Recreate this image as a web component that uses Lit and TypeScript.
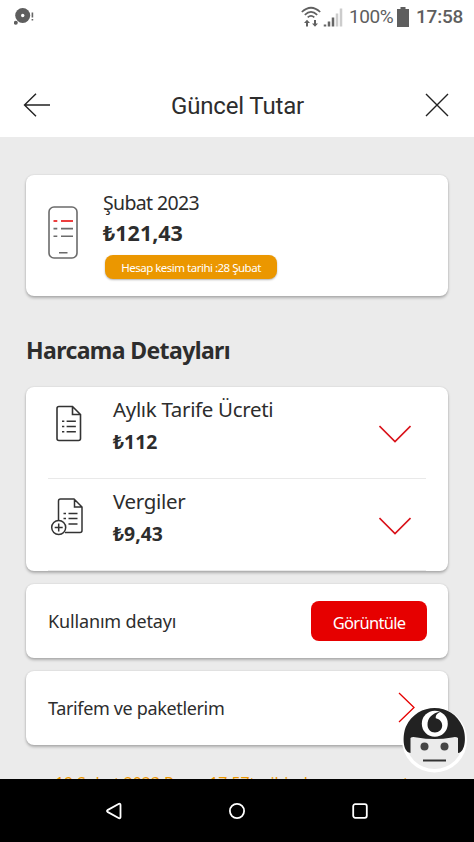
import { LitElement, html, css, svg } from "lit";
import { customElement } from "lit/decorators.js";

const lines = svg`<path d="M0 0h3M6 0h12M0 5.7h3M6 5.7h12M0 11.4h3M6 11.4h12"/>`;

@customElement("app-root")
class AppRoot extends LitElement {
  static styles = css`
    :host { display: block; position: relative; width: 474px; height: 842px; overflow: hidden; background: #ebebeb; color: #2d2d2d; font-family: "Noto Sans", "Open Sans", sans-serif; }
    * { box-sizing: border-box; }
    svg { display: block; fill: none; flex: none; }
    .screen { height: 842px; display: flex; flex-direction: column; }
    .status { height: 34px; background: #fff; display: flex; align-items: center; padding: 0 10px 0 14px; color: #5e5e5e; font-family: Roboto, sans-serif; font-size: 20px; line-height: 34px; flex: none; }
    .status .gap { flex: 1; }
    .pct { margin-left: 6px; width: 48px; white-space: nowrap; font-size: 19px; letter-spacing: -0.4px; }
    .time { margin-left: 7px; width: 48px; white-space: nowrap; font-weight: 500; font-size: 19px; letter-spacing: -0.2px; }
    .bar { height: 103px; background: #fff; display: flex; align-items: center; justify-content: space-between; padding: 38px 25px 0 23px; flex: none; }
    .title { font: 400 24px/36px Roboto, sans-serif; letter-spacing: -0.15px; margin-right: 1px; padding-top: 2px; }
    .body { flex: 1; overflow: hidden; padding: 38px 26px 0; min-height: 0; }
    .card { background: #fff; border-radius: 8px; box-shadow: 0 2px 3px rgba(0,0,0,.26), 0 0 2px rgba(0,0,0,.12); display: flex; }
    .summary { height: 121px; padding: 0 22px; }
    .summary svg { margin-top: 31px; }
    .info { margin-left: 25px; padding-top: 14px; white-space: nowrap; }
    .month { font-size: 19.5px; line-height: 28px; letter-spacing: -0.65px; }
    .total { font-size: 21.5px; line-height: 32px; font-weight: 700; }
    .pill { width: 172px; height: 24px; margin: 6px 0 0 2px; border-radius: 8px; background: #eb9700; color: #fff; font-size: 11.5px; letter-spacing: -0.5px; line-height: 25px; text-align: center; box-shadow: 0 1px 2px rgba(0,0,0,.3); }
    h2 { margin: 38px 0 20px; font-size: 23px; line-height: 33px; font-weight: 700; letter-spacing: -0.6px; white-space: nowrap; }
    .costs { height: 184px; flex-direction: column; padding: 0 22px; }
    .cost { height: 92px; border-bottom: 1px solid #e9e9e9; display: flex; flex: none; }
    .doc { width: 36px; padding-top: 18px; }
    .words { margin-left: 29px; flex: 1; padding-top: 7px; white-space: nowrap; }
    .name { font-size: 20.5px; line-height: 30px; letter-spacing: -0.33px; }
    .price { font-size: 19.4px; line-height: 28px; margin-top: 4px; font-weight: 700; }
    .chev { margin: 38px 15px 0 0; }
    .row { height: 74px; margin-top: 13px; align-items: center; justify-content: space-between; padding: 0 21px 0 22px; font-size: 18px; white-space: nowrap; }
    .usage { letter-spacing: -0.15px; }
    .plans { letter-spacing: -0.35px; }
    .button { width: 116px; height: 40px; border-radius: 8px; background: #e60000; color: #fff; font-size: 16.5px; letter-spacing: -0.7px; line-height: 43px; text-align: center; }
    .arrow { margin-right: 11px; margin-top: -2px; }
    .note { margin: 26px 0 0 29px; color: #eb9700; font-size: 16px; letter-spacing: -0.12px; line-height: 24px; white-space: nowrap; }
    .nav { height: 63px; background: #000; display: flex; justify-content: space-between; align-items: center; padding: 0 105px; flex: none; }
    .bot { position: absolute; left: 401px; top: 706px; }
  `;
  render() {
    return html`<div class="screen">
      <div class="status">
        <svg width="22" height="20" viewBox="0 0 22 20"><circle cx="8.7" cy="8.5" r="7.5" fill="#5e5e5e"/><circle cx="8.7" cy="8.5" r="1.7" fill="#fff"/><circle cx="1.8" cy="15.7" r="2" fill="#5e5e5e"/><path d="M18.4 5.500v5M18.4 12v1.500" stroke="#666" stroke-width="1.6"/></svg>
        <span class="gap"></span>
        <svg width="42" height="22" viewBox="0 0 42 22"><g stroke="#606060" stroke-width="1.7"><path d="M.8 6Q10 -2.500 19.2 6M3.800 8.800Q10 3 16.200 8.800M6.700 11.300Q10 8.300 13.300 11.300"/><path d="M6 20.500v-4M14 14v4" stroke-width="2"/></g><path d="M3 17l3-3.200L9 17zM11 17.500l3 3.200 3-3.200z" fill="#606060"/><path d="M24 20.500v-2M28 20.500v-5M32 20.500v-9" stroke="#666" stroke-width="2.500"/><path d="M36 20.500v-13M40 20.500v-18" stroke="#ccc" stroke-width="2.500"/></svg>
        <span class="pct">100%</span>
        <svg width="12" height="20" viewBox="0 0 12 20"><path d="M3.500 0h5v2H12v18H0V2h3.500z" fill="#5e5e5e"/></svg>
        <span class="time">17:58</span>
      </div>
      <div class="bar">
        <svg width="28" height="24" viewBox="0 0 28 24" stroke="#222" stroke-width="1.4"><path d="M27 12H1.500M13 .7L1.500 12 13 23.300"/></svg>
        <span class="title">Güncel Tutar</span>
        <svg width="24" height="24" viewBox="0 0 24 24" stroke="#222" stroke-width="1.4"><path d="M1 1l22 22M23 1L1 23"/></svg>
      </div>
      <div class="body">
        <div class="card summary">
          <svg width="30" height="53" viewBox="0 0 30 53" stroke="#6b6b6b" stroke-width="1.6"><rect x="1" y="1" width="28" height="51" rx="5"/><path d="M5.500 15h3.800M13 15h12" stroke="#e60000"/><path d="M5.500 22.600h3.800M13 22.600h12M5.500 30.300h3.800M13 30.300h12M11 46.700h8.500"/></svg>
          <div class="info"><div class="month">Şubat 2023</div><div class="total">₺121,43</div><div class="pill">Hesap kesim tarihi :28 Şubat</div></div>
        </div>
        <h2>Harcama Detayları</h2>
        <div class="card costs">
          <div class="cost">
            <div class="doc"><svg width="36" height="38" viewBox="0 0 36 38" stroke="#333" stroke-width="1.6"><path d="M11 1.500H24.500l8 8V33.500q0 2-2 2H11q-2 0-2-2V3.500q0-2 2-2zM24.500 1.500V9.500H32.500"/><g transform="translate(14 16.300) scale(.77 .92)">${lines}</g></svg></div>
            <div class="words"><div class="name">Aylık Tarife Ücreti</div><div class="price">₺112</div></div>
            <svg class="chev" width="32" height="18" viewBox="0 0 32 18" stroke="#d9121a" stroke-width="1.6"><path d="M.5 1L16 16.500 31.500 1"/></svg>
          </div>
          <div class="cost">
            <div class="doc"><svg width="36" height="40" viewBox="0 0 36 40" stroke="#333" stroke-width="1.5"><path d="M10.500 23V4q0-2 2-2H26l8 8V33.500q0 2-2 2H17M26.500 2V10H34"/><path d="M15.500 16.500h2.500M20.500 16.500h9M15.500 21.500h2.500M20.500 21.500h9M20.500 27h9"/><circle cx="10.700" cy="30.500" r="7" fill="#fff"/><path d="M6.700 30.500h8M10.700 26.500v8"/></svg></div>
            <div class="words"><div class="name">Vergiler</div><div class="price">₺9,43</div></div>
            <svg class="chev" width="32" height="18" viewBox="0 0 32 18" stroke="#d9121a" stroke-width="1.6"><path d="M.5 1L16 16.500 31.500 1"/></svg>
          </div>
        </div>
        <div class="card row"><span class="usage">Kullanım detayı</span><span class="button">Görüntüle</span></div>
        <div class="card row"><span class="plans">Tarifem ve paketlerim</span><svg class="arrow" width="18" height="31" viewBox="0 0 18 31" stroke="#e60000" stroke-width="1.3"><path d="M1 1L16 15.500 1 30"/></svg></div>
        <div class="note">19 Şubat 2023 Pazar 17:57tarihinden sonra yapt</div>
      </div>
      <div class="nav">
        <svg width="18" height="20" viewBox="0 0 18 20" stroke="#fff" stroke-width="1.8" stroke-linejoin="round"><path d="M2.500 9.100Q1.500 10 2.500 10.900L14 17.200Q15.500 17.600 15.500 16V4Q15.500 2.400 14 2.800z"/></svg>
        <svg width="18" height="18" viewBox="0 0 18 18" stroke="#fff" stroke-width="1.8"><circle cx="9" cy="9" r="7.100"/></svg>
        <svg width="18" height="18" viewBox="0 0 18 18" stroke="#fff" stroke-width="1.8"><rect x="2.200" y="2.200" width="13.600" height="13.600" rx="2"/></svg>
      </div>
      <svg class="bot" width="66" height="68" viewBox="0 0 66 68"><circle cx="33.500" cy="34" r="32.500" fill="#fff"/><circle cx="33.500" cy="34" r="29" fill="#ebebeb"/><path d="M9.500 47C1 46 1.500 28 5 20.500C11 8 22 2 33.500 2C46 2 56 8.500 61.500 20.500C65.500 29 65 46 57 47V32Q55 30.500 51 31.500Q33.500 34.500 16 31.500Q11 30.500 9.500 32z" fill="#222"/><circle cx="33.800" cy="17.800" r="13" fill="#fff"/><path d="M39.500 5.800C35.500 7.500 34.500 10 34.800 12.200C39 13.200 41.200 16 41.200 19.500C41.200 23.500 38 26.500 34 26.500C29.500 26.500 26.500 23 26.500 18.500C26.500 12.500 31 6.800 39.500 5.800z" fill="#222"/><circle cx="23.500" cy="40.500" r="4" fill="#444"/><circle cx="43.500" cy="40.500" r="4" fill="#444"/><path d="M22 54.500H45" stroke="#333" stroke-width="2"/></svg>
    </div>`;
  }
}
